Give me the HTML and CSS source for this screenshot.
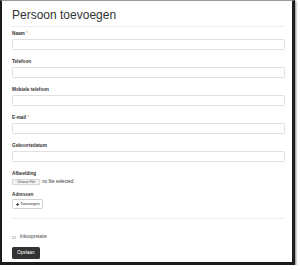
FILE: index.html
```html
<!DOCTYPE html>
<html lang="nl">
<head>
<meta charset="utf-8">
<title>Persoon toevoegen</title>
<link rel="stylesheet" href="styles.css">
</head>
<body>
<div class="window">
  <h1 class="title">Persoon toevoegen</h1>
  <hr class="rule">
  <form class="form">
    <div class="group">
      <label class="lbl">Naam <span class="req">*</span></label>
      <input class="input" type="text">
    </div>
    <div class="group">
      <label class="lbl">Telefoon</label>
      <input class="input" type="text">
    </div>
    <div class="group">
      <label class="lbl">Mobiele telefoon</label>
      <input class="input" type="text">
    </div>
    <div class="group">
      <label class="lbl">E-mail <span class="req">*</span></label>
      <input class="input" type="text">
    </div>
    <div class="group">
      <label class="lbl">Geboortedatum</label>
      <input class="input" type="text">
    </div>
    <div class="group group-file">
      <label class="lbl">Afbeelding</label>
      <div class="file-row">
        <span class="file-btn">Choose File</span>
        <span class="file-text">no file selected</span>
      </div>
    </div>
    <div class="group group-addr">
      <label class="lbl">Adressen</label>
      <span class="add-btn">
        <svg class="plus" viewBox="0 0 10 10" aria-hidden="true"><path d="M3.8 0h2.4v3.8H10v2.4H6.2V10H3.8V6.2H0V3.8h3.8z" fill="#222"/></svg>
        <span>Toevoegen</span>
      </span>
    </div>
    <hr class="rule rule-bottom">
    <div class="check-row">
      <span class="checkbox"></span>
      <span class="check-text">Inkoopretatie</span>
    </div>
    <div class="actions">
      <span class="save-btn">Opslaan</span>
    </div>
  </form>
</div>
</body>
</html>
```
FILE: styles.css
```css
html, body {
  margin: 0;
  padding: 0;
  background: #fff;
}
body {
  font-family: "Liberation Sans", Arial, sans-serif;
  color: #333;
}
.window {
  box-sizing: border-box;
  width: 295px;
  height: 265px;
  border-left: 2px solid #1c1c1c;
  border-top: 1px solid #9a9a9a;
  border-right: 3px solid #1c1c1c;
  border-bottom: 3px solid #1c1c1c;
  box-shadow: 1px 1px 2px rgba(0, 0, 0, 0.5);
  padding: 7px 7px 0 10px;
  background: #fff;
  overflow: hidden;
}
.title {
  margin: 0;
  font-size: 12px;
  line-height: 14px;
  font-weight: normal;
  color: #333;
}
.rule {
  margin: 4px 0 0;
  border: 0;
  border-top: 1px solid #eee;
  height: 0;
}
.form {
  margin: 4px 0 0;
  font-size: 4.7px;
  line-height: 6px;
}
.group {
  margin-bottom: 9.5px;
}
.lbl {
  display: block;
  font-size: 4.7px;
  line-height: 6px;
  font-weight: bold;
  margin-bottom: 1.5px;
  color: #333;
}
.req {
  color: #f0a040;
  font-weight: normal;
}
.input {
  display: block;
  box-sizing: border-box;
  width: 100%;
  height: 11px;
  margin: 0;
  padding: 0;
  border: 1px solid #e0e0e0;
  border-radius: 1.5px;
  background: #fff;
  outline: none;
}
.group-file {
  margin-bottom: 6.6px;
}
.file-row {
  display: flex;
  align-items: center;
  gap: 1.6px;
  height: 6.7px;
}
.file-btn {
  box-sizing: border-box;
  display: flex;
  align-items: center;
  justify-content: center;
  width: 28.4px;
  height: 6.7px;
  font-size: 3.4px;
  color: #444;
  background: #f3f3f3;
  border: 1px solid #d6d6d6;
  border-radius: 1px;
}
.file-text {
  font-size: 4.7px;
  color: #333;
}
.group-addr {
  margin-bottom: 0;
}
.group-addr .lbl {
  margin-bottom: 1.2px;
}
.add-btn {
  box-sizing: border-box;
  display: flex;
  width: fit-content;
  align-items: center;
  gap: 1.2px;
  height: 10.5px;
  padding: 0 2.6px;
  border: 1px solid #d0d0d0;
  border-radius: 1.5px;
  font-size: 4px;
  color: #333;
  background: #fff;
}
.plus {
  width: 3.4px;
  height: 3.4px;
}
.rule-bottom {
  margin-top: 8.5px;
}
.check-row {
  display: flex;
  align-items: center;
  gap: 4.3px;
  height: 6px;
  margin-top: 15.4px;
}
.checkbox {
  box-sizing: border-box;
  width: 3.5px;
  height: 3.5px;
  border: 1px solid #cfcfcf;
  border-radius: 0.5px;
  background: #fff;
}
.check-text {
  font-size: 4.7px;
  color: #444;
}
.actions {
  display: flex;
  margin-top: 7px;
}
.save-btn {
  display: flex;
  align-items: center;
  justify-content: center;
  box-sizing: border-box;
  width: 27.7px;
  height: 11.6px;
  background: #333;
  color: #fff;
  font-size: 4.7px;
  border-radius: 1.5px;
}
```
